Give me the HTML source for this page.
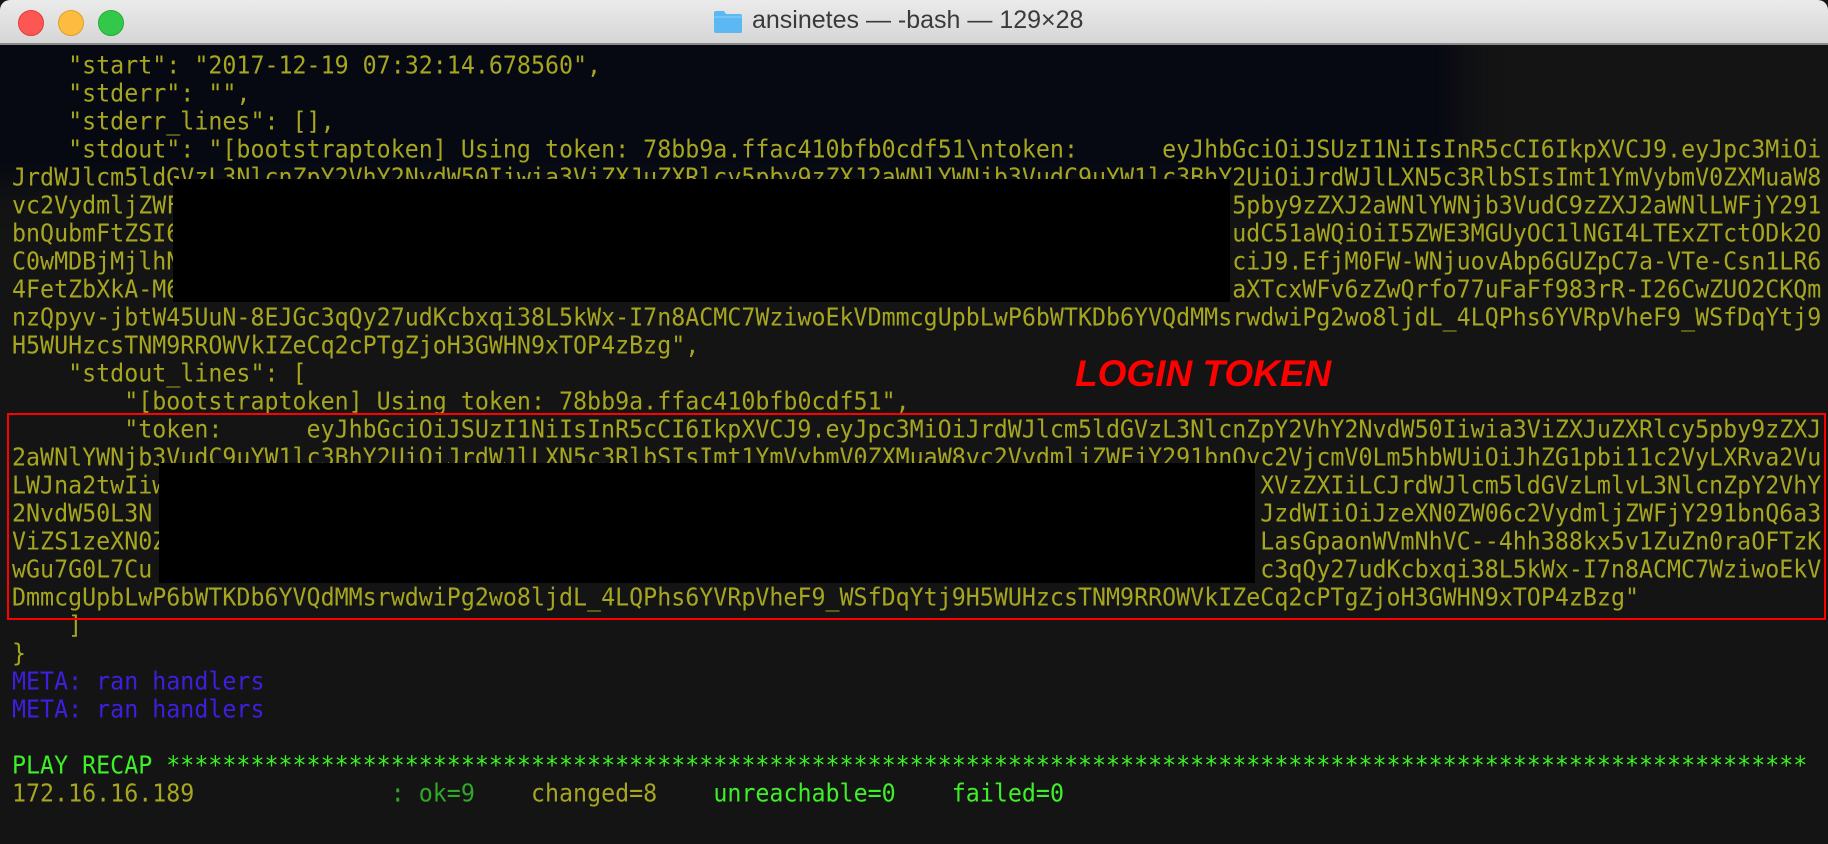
<!DOCTYPE html>
<html><head><meta charset="utf-8"><style>
html,body{margin:0;padding:0;width:1828px;height:844px;overflow:hidden;background:#141414}
#tb{position:absolute;left:0;top:0;width:1828px;height:43px;background:linear-gradient(#ebebeb,#d6d6d6);border-bottom:2px solid #8a8a8a;border-radius:10px 10px 0 0}
.dot{position:absolute;top:10px;width:24px;height:24px;border-radius:50%}
#title{position:absolute;left:752px;top:6px;font:25px "Liberation Sans",sans-serif;color:#3a3a3a;white-space:pre}
#term{position:absolute;left:0;top:45px;width:1828px;height:799px;background:#141414;overflow:hidden}
#shade{position:absolute;left:-40px;top:-40px;width:1500px;height:180px;background:#060912;filter:blur(18px)}
.ln{position:absolute;left:12px;width:129ch;height:28px;font:23.3px/28px "DejaVu Sans Mono","Liberation Mono",monospace;color:#a6a620;white-space:pre;transform:scaleY(1.08)}
.r{position:absolute;right:0;top:0}
.bx{position:absolute;background:#000}
.b{color:#3d1fe0}.g{color:#3ef028}.dg{color:#2fa827}
</style></head><body>
<div id="tb">
<div class="dot" style="left:18px;background:#fc5753;border:1px solid #df3d39"></div>
<div class="dot" style="left:58px;background:#fdbc40;border:1px solid #de9f31"></div>
<div class="dot" style="left:98px;background:#34c84a;border:1px solid #27aa35"></div>
<svg style="position:absolute;left:713px;top:10px" width="30" height="24" viewBox="0 0 30 24"><path d="M1 3 Q1 1 3 1 H11 L13 4 H27 Q29 4 29 6 V22 Q29 23 27 23 H3 Q1 23 1 21Z" fill="#5cb8f2"/><path d="M1 7 H29" stroke="#8fd0fa" stroke-width="1"/></svg>
<div id="title">ansinetes — -bash — 129×28</div>
</div>
<div id="term"><div id="shade"></div></div>
<div style="position:absolute;left:0;top:48px">
<div class="ln" style="top:4px">    "start": "2017-12-19 07:32:14.678560",</div>
<div class="ln" style="top:32px">    "stderr": "",</div>
<div class="ln" style="top:60px">    "stderr_lines": [],</div>
<div class="ln" style="top:88px">    "stdout": "[bootstraptoken] Using token: 78bb9a.ffac410bfb0cdf51\ntoken:<span class="r">eyJhbGciOiJSUzI1NiIsInR5cCI6IkpXVCJ9.eyJpc3MiOi</span></div>
<div class="ln" style="top:116px"><span>JrdWJlcm5ldGVzL3NlcnZpY2VhY2NvdW50Iiwia3ViZXJuZXRlcy5pby9zZXJ2aWNlYWNjb3VudC9</span><span class="r">uYW1lc3BhY2UiOiJrdWJlLXN5c3RlbSIsImt1YmVybmV0ZXMuaW8</span></div>
<div class="ln" style="top:144px">vc2VydmljZWF<span class="r">5pby9zZXJ2aWNlYWNjb3VudC9zZXJ2aWNlLWFjY291</span></div>
<div class="ln" style="top:172px">bnQubmFtZSI6<span class="r">udC51aWQiOiI5ZWE3MGUyOC1lNGI4LTExZTctODk2O</span></div>
<div class="ln" style="top:200px">C0wMDBjMjlhN<span class="r">ciJ9.EfjM0FW-WNjuovAbp6GUZpC7a-VTe-Csn1LR6</span></div>
<div class="ln" style="top:228px">4FetZbXkA-M6<span class="r">aXTcxWFv6zZwQrfo77uFaFf983rR-I26CwZUO2CKQm</span></div>
<div class="ln" style="top:256px"><span>nzQpyv-jbtW45UuN-8EJGc3qQy27udKcbxqi38L5kWx-I7n8ACMC7WziwoEkVDmmcgUpbL</span><span class="r">wP6bWTKDb6YVQdMMsrwdwiPg2wo8ljdL_4LQPhs6YVRpVheF9_WSfDqYtj9</span></div>
<div class="ln" style="top:284px">H5WUHzcsTNM9RROWVkIZeCq2cPTgZjoH3GWHN9xTOP4zBzg",</div>
<div class="ln" style="top:312px">    "stdout_lines": [</div>
<div class="ln" style="top:340px">        "[bootstraptoken] Using token: 78bb9a.ffac410bfb0cdf51",</div>
<div class="ln" style="top:368px">        "token:<span class="r">eyJhbGciOiJSUzI1NiIsInR5cCI6IkpXVCJ9.eyJpc3MiOiJrdWJlcm5ldGVzL3NlcnZpY2VhY2NvdW50Iiwia3ViZXJuZXRlcy5pby9zZXJ</span></div>
<div class="ln" style="top:396px"><span>2aWNlYWNjb3VudC9uYW1lc3BhY2UiOiJrdWJlLXN5c3RlbSIsImt1YmVybmV0ZXMuaW8</span><span class="r">vc2VydmljZWFjY291bnQvc2VjcmV0Lm5hbWUiOiJhZG1pbi11c2VyLXRva2Vu</span></div>
<div class="ln" style="top:424px">LWJna2twIiw<span class="r">XVzZXIiLCJrdWJlcm5ldGVzLmlvL3NlcnZpY2VhY</span></div>
<div class="ln" style="top:452px">2NvdW50L3N<span class="r">JzdWIiOiJzeXN0ZW06c2VydmljZWFjY291bnQ6a3</span></div>
<div class="ln" style="top:480px">ViZS1zeXN0Z<span class="r">LasGpaonWVmNhVC--4hh388kx5v1ZuZn0raOFTzK</span></div>
<div class="ln" style="top:508px">wGu7G0L7Cu<span class="r">c3qQy27udKcbxqi38L5kWx-I7n8ACMC7WziwoEkV</span></div>
<div class="ln" style="top:536px">DmmcgUpbLwP6bWTKDb6YVQdMMsrwdwiPg2wo8ljdL_4LQPhs6YVRpVheF9_WSfDqYtj9H5WUHzcsTNM9RROWVkIZeCq2cPTgZjoH3GWHN9xTOP4zBzg"</div>
<div class="ln" style="top:564px">    ]</div>
<div class="ln" style="top:592px">}</div>
<div class="ln b" style="top:620px">META: ran handlers</div>
<div class="ln b" style="top:648px">META: ran handlers</div>
<div class="ln g" style="top:704px">PLAY RECAP *********************************************************************************************************************</div>
<div class="ln" style="top:732px">172.16.16.189              <span class="dg">: ok=9</span>    changed=8    <span class="g">unreachable=0</span>    <span class="g">failed=0</span></div>
</div>
<div class="bx" style="left:173px;top:179px;width:1057px;height:123px"></div>
<div class="bx" style="left:159px;top:463px;width:1096px;height:120px"></div>
<div style="position:absolute;left:7px;top:413px;width:1815px;height:203px;border:2.5px solid #f00"></div>
<div style="position:absolute;left:1075px;top:354px;font:italic bold 37px/40px 'Liberation Sans',sans-serif;color:#f00;white-space:pre">LOGIN TOKEN</div>
</body></html>
